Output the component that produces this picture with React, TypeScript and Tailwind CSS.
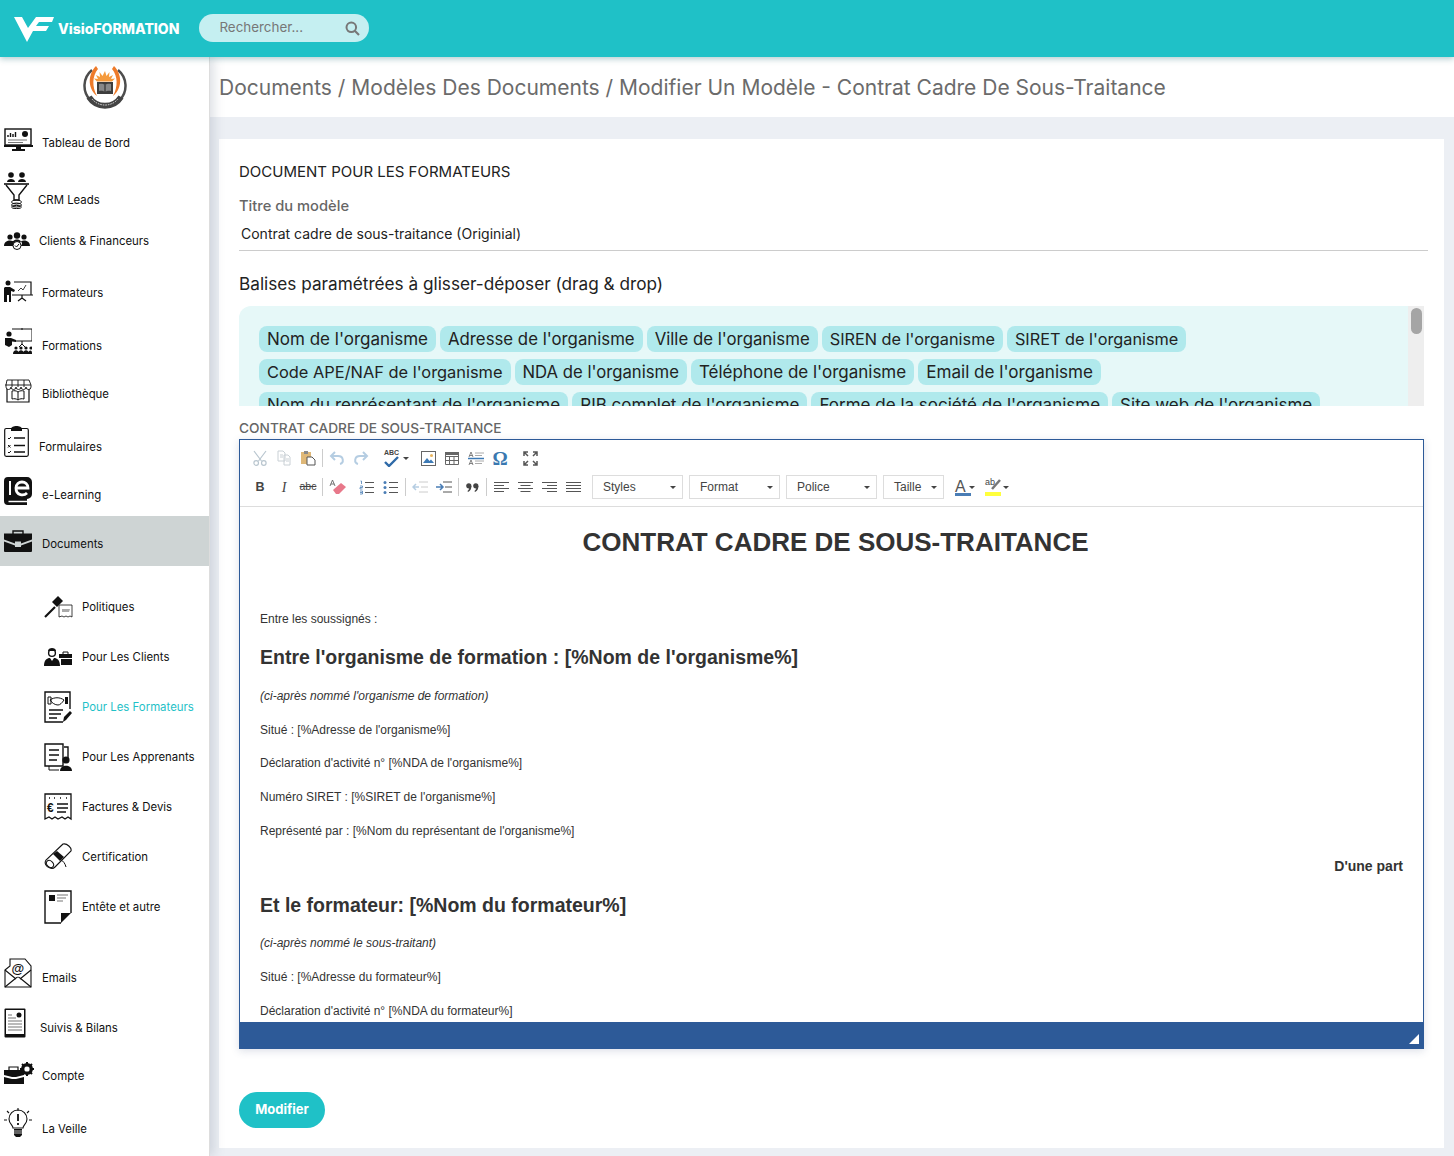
import type { ReactNode } from 'react';

const k = '#111';

function Svg({ w, h, children }: { w: number; h: number; children: ReactNode }) {
  return (
    <svg width={w} height={h} viewBox={`0 0 ${w} ${h}`} fill="none" className="shrink-0 block">
      {children}
    </svg>
  );
}

// sidebar icons
const IconDashboard = () => (
  <Svg w={29} h={23}>
    <rect x="1" y="1" width="26" height="16" stroke={k} strokeWidth="1.400" />
    <path d="M4 9V7M6.500 9V5M9 9V6M11.500 9V4" stroke={k} strokeWidth="1.400" />
    <circle cx="21" cy="6" r="3" fill={k} />
    <path d="M4 12h19M4 14.500h15" stroke="#777" strokeWidth="1.200" />
    <path d="M0 17h29v2H0zM12 19h5v2h-5zM8 21h13v2H8z" fill={k} />
  </Svg>
);
const IconCrm = () => (
  <Svg w={25} h={38}>
    <circle cx="7" cy="4" r="2.800" fill={k} />
    <circle cx="18" cy="4" r="2.800" fill={k} />
    <path d="M3 11c0-4 8-4 8 0zM14 11c0-4 8-4 8 0z" fill={k} />
    <path d="M0 13h25" stroke={k} strokeWidth="1.600" />
    <path d="M2 14l8 10v5h5v-5l8-10" stroke={k} strokeWidth="1.400" />
    <ellipse cx="12.500" cy="31" rx="5" ry="2" stroke={k} />
    <ellipse cx="12.500" cy="34" rx="5" ry="2" stroke={k} />
    <ellipse cx="12.500" cy="36" rx="5" ry="1.600" stroke={k} />
  </Svg>
);
const IconClients = () => (
  <Svg w={26} h={18}>
    <circle cx="6" cy="5" r="2.600" fill={k} />
    <circle cx="20" cy="5" r="2.600" fill={k} />
    <circle cx="13" cy="3.500" r="3.200" fill={k} />
    <path d="M0 14c0-6 9-7 10-3l-1 3zM26 14c0-6-9-7-10-3l1 3zM8 12c0-6 10-6 10 0l-2 3H9z" fill={k} />
    <circle cx="13" cy="13.500" r="4" fill="#fff" stroke={k} />
    <path d="M11 13.500l1.500 1.500 2.500-3" stroke={k} />
  </Svg>
);
const IconTrainer = () => (
  <Svg w={29} h={22}>
    <circle cx="4" cy="3" r="2.500" fill={k} />
    <path d="M1 7h5l5 3-1 2-3-1v11H5v-7H3v7H0V8z" fill={k} />
    <path d="M10 2h17v13H10M8 15h21M18 15v3m-4 3l4-3 4 3" stroke={k} strokeWidth="1.200" />
    <path d="M14 11l3-3 2 2 3-5" stroke={k} strokeWidth=".8" />
  </Svg>
);
const IconFormations = () => (
  <Svg w={28} h={26}>
    <path d="M8 1h21M28 1v12H12M18 0v2M18 13v4m-3 2l3-3 3 3" stroke={k} strokeWidth="1" />
    <circle cx="5" cy="6" r="2.600" fill={k} />
    <path d="M1 10h6l5 2v2l-4-.500V17l-3 2-4-2z" fill={k} />
    <circle cx="12" cy="20" r="1.600" fill={k} />
    <circle cx="17" cy="20" r="1.600" fill={k} />
    <circle cx="22" cy="20" r="1.600" fill={k} />
    <circle cx="27" cy="20" r="1.600" fill={k} />
    <path d="M9 26c0-5 6-5 6 0zM14 26c0-5 6-5 6 0zM19 26c0-5 6-5 6 0zM24 26c0-4 4-5 4-1v1z" fill={k} />
  </Svg>
);
const IconLibrary = () => (
  <Svg w={28} h={24}>
    <path d="M3 1h22l2 5v2a2.200 2.200 0 0 1-5 0 2.500 2.500 0 0 1-5 0 2.500 2.500 0 0 1-5 0 2.500 2.500 0 0 1-5 0 2.200 2.200 0 0 1-5 0V6zM1 6h26M8 1v7M14 1v7M20 1v7" stroke={k} strokeWidth=".9" />
    <path d="M3 10v13h22V10" stroke={k} strokeWidth="1.200" />
    <path d="M14 13c-2-1.500-4-1.500-6-1v8c2-.500 4-.500 6 1 2-1.500 4-1.500 6-1v-8c-2-.500-4-.500-6 1zM14 13v8" stroke={k} strokeWidth="1" />
  </Svg>
);
const IconForms = () => (
  <Svg w={25} h={32}>
    <rect x=".7" y="3.500" width="23.600" height="27.800" rx="1.500" stroke={k} strokeWidth="1.200" />
    <path d="M7 4c0-4 11-4 11 0v2H7z" fill={k} />
    <path d="M4 13l1 1 2-2M4 20l2.500 2.500M6.500 20L4 22.500M4 27l1 1 2-2" stroke={k} />
    <path d="M10 13h11M10 20.500h11M10 27h11" stroke={k} strokeWidth="1.400" />
  </Svg>
);
const IconElearning = () => (
  <Svg w={28} h={28}>
    <path d="M4 0h19a5 5 0 0 1 5 5v12a5 5 0 0 1-5 5v6H4a4 4 0 0 1-4-4V4a4 4 0 0 1 4-4z" fill={k} />
    <path d="M4.500 24.500H23" stroke="#fff" strokeWidth="1.500" />
    <path d="M6 4v14" stroke="#fff" strokeWidth="2" />
    <path d="M12 11h12c0-8-12-8-12 0s8 8 11 5" stroke="#fff" strokeWidth="2.800" />
  </Svg>
);
const IconCase = () => (
  <Svg w={28} h={22}>
    <path d="M9 4V1h10v3" stroke={k} strokeWidth="1.400" />
    <path d="M0 3.500h28v6l-11 4v-2h-6v2l-11-4z" fill={k} />
    <path d="M0 11.500l11 4v1.500h6v-1.500l11-4V21a1 1 0 0 1-1 1H1a1 1 0 0 1-1-1z" fill={k} />
  </Svg>
);
const IconGavel = () => (
  <Svg w={29} h={23}>
    <path d="M1 21l10-10" stroke={k} strokeWidth="2.200" />
    <path d="M8 6l6-6 5 5-6 6z" fill={k} />
    <path d="M15 9h13v12l-2-1-2 1-2-1-2 1-2-1-3 1z" fill="#fff" stroke={k} strokeWidth=".8" />
    <path d="M18 13h8l-1 3h-7z" fill="#aaa" />
  </Svg>
);
const IconClient = () => (
  <Svg w={28} h={18}>
    <circle cx="8" cy="5" r="3.400" stroke={k} strokeWidth="1.400" />
    <path d="M4 3c0-4 8-4 8 0z" fill={k} />
    <path d="M0 18c0-6 3-8 6-8l2 3 2-3c3 0 6 2 6 8z" fill={k} />
    <path d="M19 6V4h5v2" stroke={k} />
    <path d="M15 6h13v4H15zM17 11h11v6H17z" fill={k} />
  </Svg>
);
const IconHandshake = () => (
  <Svg w={28} h={32}>
    <path d="M26 18V1H1v30h18" stroke={k} strokeWidth="1.400" />
    <path d="M6 9c4-3 10-3 14 0-2 3-4 5-6 5-3 0-6-2-8-5z" fill="#fff" stroke={k} />
    <path d="M4 6h3v7H4z" stroke={k} />
    <path d="M21 6h3v7h-3z" fill={k} />
    <path d="M5 19h14M5 23h12M5 27h8" stroke={k} strokeWidth="1.500" />
    <path d="M19 31l1-5 6-6 2 2-6 7z" fill={k} />
  </Svg>
);
const IconLearners = () => (
  <Svg w={28} h={28}>
    <path d="M1 1h18v22H1zM20 4h4v12" stroke={k} strokeWidth="1.400" />
    <path d="M5 7h10M5 12h10M5 17h8" stroke={k} strokeWidth="1.600" />
    <path d="M5 23v4h10" stroke={k} />
    <circle cx="22" cy="17" r="3.600" fill={k} />
    <path d="M16 28c0-7 12-7 12 0z" fill={k} />
  </Svg>
);
const IconInvoice = () => (
  <Svg w={28} h={28}>
    <path d="M1 1h26v25l-3-2-3 2-3-2-4 2-3-2-3 2-3-2-4 2z" stroke={k} strokeWidth="1.300" />
    <path d="M5 5h1M10 5h1M16 5h1M22 5h1" stroke={k} strokeWidth="1.500" />
    <text x="3" y="19" fontFamily="'Liberation Sans', sans-serif" fontWeight="700" fontSize="12" fill={k}>€</text>
    <path d="M13 11h11M13 15h11M13 19h9" stroke={k} strokeWidth="1.500" />
  </Svg>
);
const IconScroll = () => (
  <Svg w={28} h={28}>
    <path d="M19 1L2 17c-2 3 0 7 4 8 3 1 5-1 5-1L27 8c1-3-4-8-8-7z" fill="#fff" stroke={k} strokeWidth="1.100" />
    <path d="M9 11l7 7 4-4-7-6z" fill={k} />
    <ellipse cx="6" cy="21" rx="3" ry="4" stroke={k} transform="rotate(-45 6 21)" />
    <path d="M17 17c2 1 4 3 5 7" stroke={k} />
  </Svg>
);
const IconHeader = () => (
  <Svg w={28} h={34}>
    <path d="M17 33H1V1h26v22" stroke={k} strokeWidth="1.400" />
    <path d="M5 5h6v6H5z" fill={k} />
    <path d="M13 5h11M13 8h9M13 11h6" stroke="#777" strokeWidth="1.200" />
    <path d="M17 33l10-10H17z" fill={k} />
  </Svg>
);
const IconMail = () => (
  <Svg w={28} h={30}>
    <path d="M1 12L6 8V1h15l6 7v21H1z" stroke={k} strokeWidth="1.100" />
    <path d="M1 12l11 9M27 12l-11 9M1 29l11-9c1-1 3-1 4 0l11 9" stroke={k} strokeWidth="1.100" />
    <text x="7.500" y="15" fontFamily="'Liberation Sans', sans-serif" fontSize="13" fontWeight="700" fill={k}>@</text>
  </Svg>
);
const IconTablet = () => (
  <Svg w={22} h={30}>
    <rect x=".5" y=".5" width="21" height="29" rx="1" fill={k} />
    <rect x="2" y="2" width="18" height="24" fill="#fff" />
    <path d="M4 7h4M4 10h8M4 13h14M4 16h14M4 19h14M4 22h14" stroke="#777" strokeWidth="1.100" />
    <circle cx="15" cy="7" r="2.500" fill={k} />
  </Svg>
);
const IconAccount = () => (
  <Svg w={30} h={22}>
    <path d="M5 8V5h9v3" stroke={k} strokeWidth="1.200" />
    <path d="M0 8h20v5l-8 2h-4l-8-2z" fill={k} />
    <path d="M0 15l8 2h4l8-2v7H0z" fill={k} />
    <circle cx="23" cy="7" r="4.500" stroke={k} strokeWidth="3" />
    <path d="M23 0v14M16 7h14M18 2l10 10M28 2L18 12" stroke={k} strokeWidth="2" />
    <circle cx="23" cy="7" r="2.600" fill="#fff" />
  </Svg>
);
const IconBulb = () => (
  <Svg w={28} h={30}>
    <path d="M9 20c0-3-4-4-4-9a9 9 0 0 1 18 0c0 5-4 6-4 9z" stroke={k} strokeWidth="1.100" />
    <path d="M14 6v7M14 15v2" stroke={k} strokeWidth="1.800" />
    <path d="M14 0v3M3 3l2 2M25 3l-2 2M0 12h3M25 12h3" stroke={k} strokeWidth="1.100" />
    <path d="M10 21h8v6l-2 2h-4l-2-2z" fill={k} />
    <path d="M10 23h8M10 25h8" stroke="#fff" strokeWidth=".7" />
  </Svg>
);

type NavItem = { label: string; icon: ReactNode; top: string; text: string };

const mainNav: NavItem[] = [
  { label: 'Tableau de Bord', icon: <IconDashboard />, top: 'mt-[19px]', text: 'ml-[9px]' },
  { label: 'CRM Leads', icon: <IconCrm />, top: 'mt-[20px]', text: 'ml-[9px] mb-[1px]' },
  { label: 'Clients & Financeurs', icon: <IconClients />, top: 'mt-[23px]', text: 'ml-[9px] mb-[1px]' },
  { label: 'Formateurs', icon: <IconTrainer />, top: 'mt-[30px]', text: 'ml-[9px] mb-[1px]' },
  { label: 'Formations', icon: <IconFormations />, top: 'mt-[26px]', text: 'ml-[10px]' },
  { label: 'Bibliothèque', icon: <IconLibrary />, top: 'mt-[25px]', text: 'ml-[10px] mb-[1px]' },
  { label: 'Formulaires', icon: <IconForms />, top: 'mt-[22px]', text: 'ml-[10px] mb-[2px]' },
  { label: 'e-Learning', icon: <IconElearning />, top: 'mt-[20px]', text: 'ml-[10px] mb-[2px]' },
];

const subNav = [
  { label: 'Politiques', icon: <IconGavel /> },
  { label: 'Pour Les Clients', icon: <IconClient /> },
  { label: 'Pour Les Formateurs', icon: <IconHandshake />, active: true },
  { label: 'Pour Les Apprenants', icon: <IconLearners /> },
  { label: 'Factures & Devis', icon: <IconInvoice /> },
  { label: 'Certification', icon: <IconScroll /> },
  { label: 'Entête et autre', icon: <IconHeader /> },
];

const bottomNav: NavItem[] = [
  { label: 'Emails', icon: <IconMail />, top: 'mt-[26px]', text: 'ml-[10px] mb-[2px]' },
  { label: 'Suivis & Bilans', icon: <IconTablet />, top: 'mt-[20px]', text: 'ml-[14px] mb-[2px]' },
  { label: 'Compte', icon: <IconAccount />, top: 'mt-[24px]', text: 'ml-[8px]' },
  { label: 'La Veille', icon: <IconBulb />, top: 'mt-[24px]', text: 'ml-[10px] mb-[1px]' },
];

function NavRow({ item }: { item: NavItem }) {
  return (
    <div className={`flex items-end pl-[4px] ${item.top}`}>
      {item.icon}
      <span className={`text-[11.400px] leading-[16px] text-[#111] ${item.text}`}>{item.label}</span>
    </div>
  );
}

function Emblem() {
  return (
    <svg width="44" height="44" viewBox="0 0 44 44" fill="none" className="block">
      <path d="M9 5A20.500 20.500 0 1 0 35 5" stroke="#4d4d4d" strokeWidth="2.500" />
      <path d="M6 32A19 19 0 0 0 38 32" stroke="#444" strokeWidth="6" />
      <path d="M9 34A17 17 0 0 0 35 34" stroke="#ddd" strokeWidth="1" strokeDasharray="1.500 1" />
      <path d="M13 1C5 9 4 23 14 31 9 22 9 11 15 4z" fill="#ee7b2a" />
      <path d="M31 1c8 8 9 22-1 30 5-9 5-20-1-27z" fill="#ee7b2a" />
      <path d="M22 6l1.500 5 3-4-.5 5 4-2-2 4 4-.5-3 3H14l-3-3 4 .5-2-4 4 2-.5-5 3 4z" fill="#f59a3c" />
      <path d="M14 17h16v12H14z" fill="#3d3d3d" />
      <path d="M16 19c2-.500 4-.500 6 1 2-1.500 4-1.500 6-1v7c-2-.500-4-.500-6 1-2-1.500-4-1.500-6-1z" fill="#888" />
      <path d="M22 20v7" stroke="#222" />
    </svg>
  );
}

function Sidebar() {
  return (
    <aside className="z-10 w-[210px] shrink-0 overflow-hidden border-r border-[#ddd] bg-white shadow-[4px_0_10px_rgba(120,130,150,0.25)]">
      <div className="flex justify-center pt-[8px]">
        <Emblem />
      </div>
      {mainNav.map((item) => (
        <NavRow key={item.label} item={item} />
      ))}
      <div className="mt-[11px] flex h-[50px] items-center bg-[#ced4d4] pl-[4px]">
        <IconCase />
        <span className="ml-[10px] mt-[5px] text-[11.400px] leading-[16px] text-[#111]">Documents</span>
      </div>
      <div className="pt-[16px]">
        {subNav.map((item) => (
          <div key={item.label} className="flex h-[50px] items-center pl-[44px]">
            <div className="flex w-[28px] justify-center">{item.icon}</div>
            <span className={`ml-[10px] text-[11.400px] leading-[16px] ${item.active ? 'text-[#1fc1c7]' : 'text-[#111]'}`}>{item.label}</span>
          </div>
        ))}
      </div>
      {bottomNav.map((item) => (
        <NavRow key={item.label} item={item} />
      ))}
    </aside>
  );
}

function Logo() {
  return (
    <svg width="40" height="26" viewBox="0 0 40 26" className="block">
      <path d="M0 1h8l6 11L22 1h18l-2 5H25l-3 4h13l-3 5H19l-6 11z" fill="#fff" />
    </svg>
  );
}

function TopBar() {
  return (
    <header className="relative z-20 flex h-[57px] shrink-0 items-center bg-[#1fc1c7] pl-[14px] shadow-[0_2px_6px_rgba(0,90,100,0.3)]">
      <Logo />
      <span className="ml-[4px] mt-[1px] text-[14px] font-extrabold leading-none text-white">VisioFORMATION</span>
      <div className="ml-[20px] mb-[2px] flex h-[28px] w-[170px] items-center justify-between rounded-full bg-[#c5eff1] pl-[20px] pr-[9px]">
        <span className="text-[13.400px] text-[#777]">Rechercher...</span>
        <svg width="15" height="15" viewBox="0 0 15 15" fill="none" className="mt-[2px]">
          <circle cx="6.300" cy="6.300" r="4.800" stroke="#777" strokeWidth="2" />
          <path d="M10 10l4 4" stroke="#777" strokeWidth="2.200" />
        </svg>
      </div>
    </header>
  );
}

// uppercase runs are wider in Inter than in the original face, so those tags get a smaller size
const tagRows = [
  [
    { t: "Nom de l'organisme", c: 'text-[17px]' },
    { t: "Adresse de l'organisme", c: 'text-[16.800px]' },
    { t: "Ville de l'organisme", c: 'text-[16.800px]' },
    { t: "SIREN de l'organisme", c: 'text-[16.300px]' },
    { t: "SIRET de l'organisme", c: 'text-[16.300px]' },
  ],
  [
    { t: "Code APE/NAF de l'organisme", c: 'text-[16.400px]' },
    { t: "NDA de l'organisme", c: 'text-[16.700px]' },
    { t: "Téléphone de l'organisme", c: 'text-[17px]' },
    { t: "Email de l'organisme", c: 'text-[17.100px]' },
  ],
  [
    { t: "Nom du représentant de l'organisme", c: 'text-[17px]' },
    { t: "RIB complet de l'organisme", c: 'text-[17px]' },
    { t: "Forme de la société de l'organisme", c: 'text-[17px]' },
    { t: "Site web de l'organisme", c: 'text-[17px]' },
  ],
];

function Tags() {
  return (
    <div className="mt-[10px] flex h-[100px] w-[1185px] overflow-hidden rounded-tl-[12px] bg-[#e6f8f8]">
      <div className="flex-1 overflow-hidden pl-[20px] pt-[20px]">
        {tagRows.map((row, i) => (
          <div key={i} className="mb-[7px] flex gap-[4px]">
            {row.map((tag) => (
              <span key={tag.t} className={`h-[26px] whitespace-nowrap rounded-[8px] bg-[#b0e9ec] px-[8px] leading-[26px] text-[#222] ${tag.c}`}>
                {tag.t}
              </span>
            ))}
          </div>
        ))}
      </div>
      <div className="w-[16px] shrink-0 bg-[#eeeeee] pl-[3px] pt-[2px]">
        <div className="h-[26px] w-[11px] rounded-full bg-[#a5a5a5]" />
      </div>
    </div>
  );
}

const blue = '#4a7db5';
const gr = '#555';

function Tb({ w = 'w-[24px]', children }: { w?: string; children: ReactNode }) {
  return <div className={`flex h-[24px] items-center justify-center ${w}`}>{children}</div>;
}
const Sep = ({ m }: { m: string }) => <div className={`h-[18px] w-px bg-[#ccc] ${m}`} />;
const Caret = () => <span className="ml-[3px] h-0 w-0 border-x-[3px] border-t-[3px] border-x-transparent border-t-[#444]" />;

function Lines({ rows }: { rows: string[] }) {
  return (
    <svg width="15" height="12" viewBox="0 0 15 12" fill="none">
      {rows.map((d) => (
        <path key={d} d={d} stroke={gr} />
      ))}
    </svg>
  );
}

function Combo({ label, w }: { label: string; w: string }) {
  return (
    <div className={`flex h-[24px] items-center justify-between border border-[#ddd] pl-[10px] pr-[6px] font-['Liberation_Sans',sans-serif] text-[12px] text-[#444] ${w}`}>
      {label}
      <span className="h-0 w-0 border-x-[3px] border-t-[3px] border-x-transparent border-t-[#444]" />
    </div>
  );
}

function Toolbar() {
  return (
    <div className="h-[67px] border-b border-[#ddd] pl-[8px] pt-[6px]">
      <div className="flex h-[24px] items-center">
        <Tb>
          <svg width="16" height="16" viewBox="0 0 16 16" fill="none" stroke="#b9c6cf" strokeWidth="1.200">
            <path d="M2 1l7.500 10M14 1L6.500 11" />
            <circle cx="4.200" cy="13" r="2.300" />
            <circle cx="11.800" cy="13" r="2.300" />
          </svg>
        </Tb>
        <Tb>
          <svg width="16" height="16" viewBox="0 0 16 16" fill="none" stroke="#c9d0d5">
            <path d="M2 1h5l2 2v8H2zM8 5h4l2 2v8H8z" fill="#fff" />
            <path d="M4 5h3M4 7h3M10 9h3M10 11h3" />
          </svg>
        </Tb>
        <Tb>
          <svg width="16" height="16" viewBox="0 0 16 16">
            <path d="M1 2h10v12H1z" fill="#dfb878" />
            <path d="M4 1h4v3H4z" fill="#8a8a8a" />
            <path d="M7 7h5l3 3v5H7z" fill="#fff" stroke="#555" />
          </svg>
        </Tb>
        <Sep m="ml-[2px] mr-[2px]" />
        <Tb>
          <svg width="16" height="14" viewBox="0 0 16 14" fill="none" stroke="#b5cde2" strokeWidth="2">
            <path d="M6 1L2 5l4 4M2 5h7c6 0 6 7 2 8" />
          </svg>
        </Tb>
        <Tb>
          <svg width="16" height="14" viewBox="0 0 16 14" fill="none" stroke="#b5cde2" strokeWidth="2">
            <path d="M10 1l4 4-4 4M14 5H7c-6 0-6 7-2 8" />
          </svg>
        </Tb>
        <Tb w="w-[43px] pl-[3px]">
          <span className="relative flex h-[18px] w-[17px] justify-center">
            <span className="font-['Liberation_Sans',sans-serif] text-[7px] font-bold leading-[8px] text-[#444]">ABC</span>
            <svg width="15" height="11" viewBox="0 0 15 11" fill="none" className="absolute left-[1px] top-[7px]">
              <path d="M1 6l4 4 9-9" stroke="#2f6aa8" strokeWidth="2.400" />
            </svg>
          </span>
          <Caret />
        </Tb>
        <Tb>
          <svg width="15" height="15" viewBox="0 0 15 15">
            <rect x=".5" y=".5" width="14" height="14" fill="#fff" stroke="#666" />
            <path d="M2 12l4-5 2.500 3 1.500-1.500 3 3.500z" fill="#3d7ab5" />
            <circle cx="10.500" cy="4.500" r="1.500" fill="#e9b45c" />
          </svg>
        </Tb>
        <Tb>
          <svg width="14" height="13" viewBox="0 0 14 13" fill="none" stroke="#666">
            <path d="M.5.500h13v12H.500zM.5 4.500h13M.5 8.500h13M4.500 4v8.500M9 4v8.500" />
            <path d="M0 0h14v3H0z" fill="#666" stroke="none" />
          </svg>
        </Tb>
        <Tb>
          <svg width="16" height="15" viewBox="0 0 16 15" fill="none">
            <path d="M1 6l2-5 2 5M1.500 4.500h3M1 14l2-5 2 5M1.500 12.500h3" stroke="#666" strokeWidth=".8" />
            <path d="M0 7.500h16" stroke="#3d7ab5" strokeWidth="1.500" />
            <path d="M7 2h9M7 4.500h7M7 10h9M7 12.500h7" stroke="#aaa" />
          </svg>
        </Tb>
        <Tb>
          <span className="font-['Liberation_Serif',serif] text-[19px] font-bold leading-none text-[#3a78b0]">Ω</span>
        </Tb>
        <Tb w="w-[24px] ml-[6px]">
          <svg width="15" height="15" viewBox="0 0 15 15" fill="none" stroke="#555" strokeWidth="1.500">
            <path d="M1 5V1h4M1 1l4 4M14 5V1h-4M14 1l-4 4M1 10v4h4M1 14l4-4M14 10v4h-4M14 14l-4-4" />
          </svg>
        </Tb>
      </div>
      <div className="mt-[5px] flex h-[24px] items-center">
        <Tb><span className="font-['Liberation_Sans',sans-serif] text-[12.500px] font-bold text-[#444]">B</span></Tb>
        <Tb><span className="font-['Liberation_Serif',serif] text-[14px] italic text-[#444]">I</span></Tb>
        <Tb><span className="font-['Liberation_Sans',sans-serif] text-[10.500px] text-[#444] line-through">abc</span></Tb>
        <Sep m="ml-[2px] mr-[3px]" />
        <Tb>
          <svg width="18" height="16" viewBox="0 0 18 16">
            <path d="M1 7l2.500-6L6 7M1.800 5h3.400" stroke="#666" strokeWidth=".9" fill="none" />
            <path d="M4 11l8-7 5 4-7 7H7z" fill="#e8788a" />
          </svg>
        </Tb>
        <div className="w-[4px]" />
        <Tb>
          <svg width="15" height="15" viewBox="0 0 15 15" fill="none">
            <path d="M6 2.500h9M6 7.500h9M6 12.500h9" stroke={gr} />
            <path d="M1.500 1h1v3M1 6h2.500v1.500H1V9h2.500M1 11h2.500v3H1M1 12.500h2" stroke={blue} strokeWidth=".8" />
          </svg>
        </Tb>
        <Tb>
          <svg width="15" height="15" viewBox="0 0 15 15">
            <path d="M6 2.500h9M6 7.500h9M6 12.500h9" stroke={gr} fill="none" />
            <circle cx="2" cy="2.500" r="1.500" fill={blue} />
            <circle cx="2" cy="7.500" r="1.500" fill={blue} />
            <circle cx="2" cy="12.500" r="1.500" fill={blue} />
          </svg>
        </Tb>
        <Sep m="ml-[3px] mr-[2px]" />
        <Tb>
          <svg width="16" height="12" viewBox="0 0 16 12" fill="none">
            <path d="M7 1h9M9 6h7M7 11h9" stroke="#ccc" />
            <path d="M7 6H1m3-3L1 6l3 3" stroke="#b5cde2" strokeWidth="1.500" />
          </svg>
        </Tb>
        <Tb>
          <svg width="16" height="12" viewBox="0 0 16 12" fill="none">
            <path d="M7 1h9M9 6h7M7 11h9" stroke={gr} />
            <path d="M0 6h6M4 3l3 3-3 3" stroke={blue} strokeWidth="1.500" />
          </svg>
        </Tb>
        <Sep m="ml-[2px] mr-[1px]" />
        <Tb>
          <svg width="13" height="9" viewBox="0 0 13 9" fill="#444">
            <circle cx="2.800" cy="2.800" r="2.600" />
            <circle cx="9.800" cy="2.800" r="2.600" />
            <path d="M3 3h2.400c0 3-1 5-3.400 6l-.5-1C3 7 3.500 5 3 3zM10 3h2.400c0 3-1 5-3.400 6l-.5-1c1.500-1 2-3 1.900-5z" />
          </svg>
        </Tb>
        <Sep m="ml-[2px] mr-[2px]" />
        <Tb><Lines rows={['M0 1.500h15', 'M0 4.500h10', 'M0 7.500h15', 'M0 10.500h10']} /></Tb>
        <Tb><Lines rows={['M0 1.500h15', 'M2.500 4.500h10', 'M0 7.500h15', 'M2.500 10.500h10']} /></Tb>
        <Tb><Lines rows={['M0 1.500h15', 'M5 4.500h10', 'M0 7.500h15', 'M5 10.500h10']} /></Tb>
        <Tb><Lines rows={['M0 1.500h15', 'M0 4.500h15', 'M0 7.500h15', 'M0 10.500h15']} /></Tb>
        <Combo label="Styles" w="w-[91px] ml-[7px]" />
        <Combo label="Format" w="w-[91px] ml-[6px]" />
        <Combo label="Police" w="w-[91px] ml-[6px]" />
        <Combo label="Taille" w="w-[61px] ml-[6px]" />
        <div className="ml-[11px] flex w-[19px] items-center">
          <span className="relative h-[18px] w-[14px] text-center font-['Liberation_Sans',sans-serif] text-[16px] leading-[17px] text-[#555]">
            A
            <span className="absolute bottom-0 left-0 h-[3px] w-[16px] bg-[#4a7db5]" />
          </span>
          <Caret />
        </div>
        <div className="ml-[11px] flex w-[24px] items-center">
          <span className="relative h-[18px] w-[16px]">
            <span className="absolute left-0 top-[-2px] font-['Liberation_Sans',sans-serif] text-[9px] text-[#444]">ab</span>
            <svg width="10" height="12" viewBox="0 0 10 12" className="absolute left-[6px] top-[0px]">
              <path d="M1 11L9 2" stroke="#777" strokeWidth="2.500" />
            </svg>
            <span className="absolute bottom-0 left-0 h-[4px] w-[16px] bg-[#ffff3c]" />
          </span>
          <Caret />
        </div>
      </div>
    </div>
  );
}

function EditorBody() {
  const p = 'mt-[17px] text-[12px] leading-[16.800px]';
  const em = 'mt-[18px] text-[12px] leading-[16.800px] italic';
  const h = 'text-[19.500px] font-bold leading-[23px]';
  return (
    <div className="h-[515px] overflow-hidden px-[20px] pt-[18px] font-['Liberation_Sans',sans-serif] text-[#333]">
      <h1 className="pl-[8px] text-center text-[26px] font-bold leading-[34px]">CONTRAT CADRE DE SOUS-TRAITANCE</h1>
      <p className="mt-[52px] text-[12px] leading-[16.800px]">Entre les soussignés :</p>
      <h2 className={`mt-[18px] ${h}`}>Entre l'organisme de formation : [%Nom de l'organisme%]</h2>
      <p className="mt-[19px] text-[12px] italic leading-[16.800px]">(ci-après nommé l'organisme de formation)</p>
      <p className={p}>Situé : [%Adresse de l'organisme%]</p>
      <p className={p}>Déclaration d'activité n° [%NDA de l'organisme%]</p>
      <p className={p}>Numéro SIRET : [%SIRET de l'organisme%]</p>
      <p className={p}>Représenté par : [%Nom du représentant de l'organisme%]</p>
      <p className="mt-[17px] text-right text-[14px] font-bold leading-[18px]">D'une part</p>
      <h2 className={`mt-[19px] ${h}`}>Et le formateur: [%Nom du formateur%]</h2>
      <p className={em}>(ci-après nommé le sous-traitant)</p>
      <p className={p}>Situé : [%Adresse du formateur%]</p>
      <p className="mt-[17.500px] text-[12px] leading-[16.800px]">Déclaration d'activité n° [%NDA du formateur%]</p>
      <p className={p}>Numéro SIRET : [%SIRET du formateur%]</p>
    </div>
  );
}

function Editor() {
  return (
    <div className="h-[610px] w-[1185px] border border-[#2d5a98] bg-white shadow-[0_2px_8px_rgba(60,80,120,0.18)]">
      <Toolbar />
      <EditorBody />
      <div className="relative h-[27px] bg-[#2d5a98]">
        <span className="absolute bottom-[5px] right-[4px] h-0 w-0 border-b-[10px] border-l-[10px] border-b-white border-l-transparent" />
      </div>
    </div>
  );
}

export default function App() {
  return (
    <div className="flex h-screen flex-col overflow-hidden bg-[#eceff4] font-['Inter',sans-serif]">
      <TopBar />
      <div className="flex min-h-0 flex-1">
        <Sidebar />
        <main className="min-w-0 flex-1">
          <div className="flex h-[60px] items-center bg-white pl-[9px] pt-[1px] text-[21px] text-[#6b6b6b]">
            Documents / Modèles Des Documents / Modifier Un Modèle - Contrat Cadre De Sous-Traitance
          </div>
          <section className="ml-[9px] mr-[10px] mt-[22px] h-[1009px] bg-white pl-[20px] pr-[16px] pt-[23px]">
            <h3 className="text-[15px] leading-[20px] text-[#222]">DOCUMENT POUR LES FORMATEURS</h3>
            <div className="mt-[14px] text-[14.700px] font-medium leading-[20px] text-[#666]">Titre du modèle</div>
            <div className="mt-[8px] h-[27px] border-b border-[#ccc] pl-[2px] text-[14px] leading-[20px] text-[#222]">
              Contrat cadre de sous-traitance (Originial)
            </div>
            <div className="mt-[21px] text-[17.200px] leading-[24px] text-[#222]">Balises paramétrées à glisser-déposer (drag & drop)</div>
            <Tags />
            <div className="mt-[13px] text-[13.700px] font-medium leading-[18px] text-[#666]">CONTRAT CADRE DE SOUS-TRAITANCE</div>
            <div className="mt-[2px]">
              <Editor />
            </div>
            <button className="mt-[43px] h-[36px] w-[86px] rounded-full bg-[#1fc1c7] text-[13px] font-bold text-white">Modifier</button>
          </section>
        </main>
      </div>
    </div>
  );
}
